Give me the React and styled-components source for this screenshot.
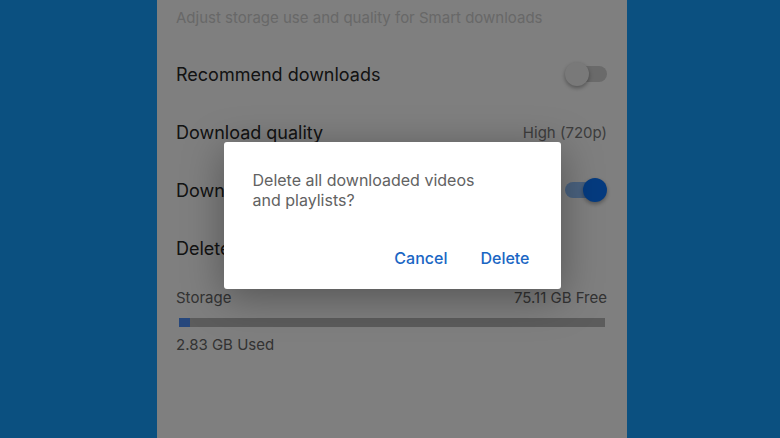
import styled, { createGlobalStyle } from "styled-components";

const Global = createGlobalStyle`
  html, body { margin: 0; padding: 0; }
  body { font-family: Inter, "Noto Sans", sans-serif; }
`;

const Page = styled.div`
  width: 780px;
  height: 438px;
  box-sizing: border-box;
  padding-left: 4px;
  background: #0b5080;
  display: flex;
  justify-content: center;
  overflow: hidden;
`;

const Panel = styled.div`
  position: relative;
  width: 470px;
  height: 438px;
  background: #ffffff;
  padding: 8px 20px 0 19px;
  box-sizing: border-box;
  overflow: hidden;
`;

const Subtitle = styled.div`
  font-size: 15px;
  line-height: 20px;
  color: #d0d0d0;
  margin-bottom: 17px;
`;

const Row = styled.div`
  height: 58px;
  display: flex;
  align-items: center;
  justify-content: space-between;
`;

const Label = styled.span`
  font-size: 18px;
  color: #262626;
  white-space: nowrap;
`;

const Value = styled.span`
  font-size: 15px;
  color: #7a7a7a;
`;

const Track = styled.div`
  position: relative;
  width: ${(p) => (p.on ? "34px" : "38px")};
  height: 16px;
  border-radius: 8px;
  background: ${(p) => (p.on ? "#94c4ff" : "#d4d4d4")};
  margin-right: ${(p) => (p.on ? "8px" : "0")};
`;

const Knob = styled.div`
  position: absolute;
  top: -4px;
  ${(p) => (p.on ? "right: -8px;" : "left: -4px;")}
  width: 24px;
  height: 24px;
  border-radius: 50%;
  background: ${(p) => (p.on ? "#0b76ff" : "#f2f2f2")};
  box-shadow: 0 2px 4px rgba(0, 0, 0, 0.35);
`;

const Toggle = ({ on }) => (
  <Track on={on ? 1 : 0}>
    <Knob on={on ? 1 : 0} />
  </Track>
);

const StorageHead = styled.div`
  display: flex;
  justify-content: space-between;
  font-size: 15px;
  line-height: 20px;
  color: #666666;
  margin-top: 11px;
`;

const Bar = styled.div`
  height: 9px;
  margin: 10px 2px 8px 3px;
  background: #b8b8b8;
`;

const Fill = styled.div`
  height: 100%;
  background: #4d8ff8;
`;

const Used = styled.div`
  font-size: 15px;
  line-height: 20px;
  color: #666666;
`;

const Scrim = styled.div`
  position: absolute;
  inset: 0;
  background: rgba(0, 0, 0, 0.5);
  display: flex;
  align-items: center;
  justify-content: center;
  padding-bottom: 7px;
`;

const Dialog = styled.div`
  width: 337px;
  height: 147px;
  box-sizing: border-box;
  background: #ffffff;
  border-radius: 3px;
  padding: 28px 31px 21px 29px;
  box-shadow: 0 8px 40px rgba(0, 0, 0, 0.35);
  display: flex;
  flex-direction: column;
`;

const Message = styled.div`
  font-size: 16px;
  line-height: 20px;
  color: #626262;
  width: 240px;
`;

const Actions = styled.div`
  margin-top: auto;
  display: flex;
  justify-content: flex-end;
  gap: 33px;
`;

const Action = styled.button`
  border: 0;
  background: none;
  padding: 0;
  font-family: inherit;
  font-size: 16px;
  line-height: 20px;
  font-weight: 500;
  color: #1a66c4;
`;

export default function App() {
  const used = 2.83;
  const free = 75.11;
  const capacity = 110;
  return (
    <>
      <Global />
      <Page>
        <Panel>
          <Subtitle>Adjust storage use and quality for Smart downloads</Subtitle>
          <Row>
            <Label>Recommend downloads</Label>
            <Toggle />
          </Row>
          <Row>
            <Label>Download quality</Label>
            <Value>High (720p)</Value>
          </Row>
          <Row>
            <Label>Download over Wi-Fi only</Label>
            <Toggle on />
          </Row>
          <Row>
            <Label>Delete all downloads</Label>
          </Row>
          <StorageHead>
            <span>Storage</span>
            <span>{free} GB Free</span>
          </StorageHead>
          <Bar>
            <Fill style={{ width: `${(used / capacity) * 100}%` }} />
          </Bar>
          <Used>{used} GB Used</Used>
          <Scrim>
            <Dialog>
              <Message>Delete all downloaded videos and playlists?</Message>
              <Actions>
                <Action>Cancel</Action>
                <Action>Delete</Action>
              </Actions>
            </Dialog>
          </Scrim>
        </Panel>
      </Page>
    </>
  );
}
